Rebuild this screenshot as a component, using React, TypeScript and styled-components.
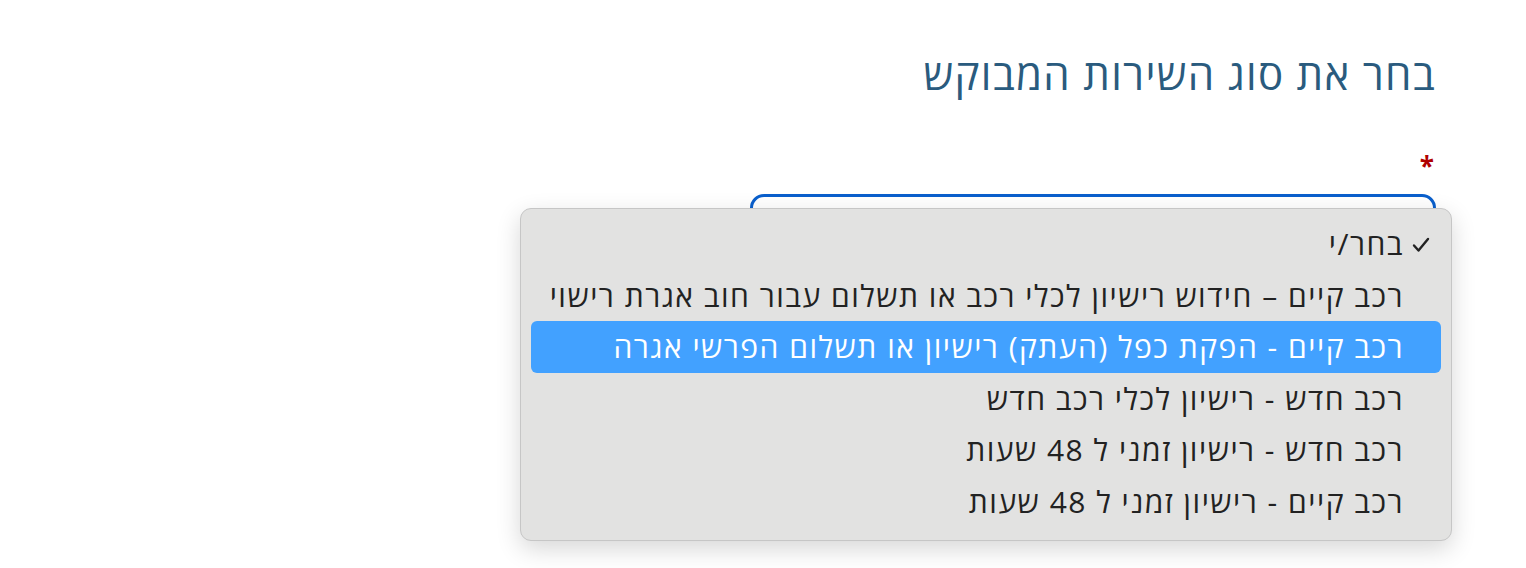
import * as React from "react";
import styled, { createGlobalStyle } from "styled-components";

const GlobalStyle = createGlobalStyle`
  html, body {
    margin: 0;
    padding: 0;
    background: #ffffff;
  }
  body {
    font-family: "Open Sans", "DejaVu Sans", sans-serif;
  }
`;

const Page = styled.div`
  direction: rtl;
  width: 1526px;
  height: 568px;
  box-sizing: border-box;
  padding: 44px 90px 0 0;
  display: flex;
  flex-direction: column;
  align-items: flex-start;
  overflow: hidden;
`;

const Title = styled.h2`
  margin: 0;
  font-family: "Open Sans", sans-serif;
  font-weight: 400;
  font-size: 42px;
  letter-spacing: 1.3px;
  line-height: 60px;
  color: #2a5b7e;
`;

const Required = styled.span`
  margin: 49px 2px 0 0;
  font-size: 26px;
  line-height: 26px;
  font-weight: 700;
  color: #b00000;
`;

const Field = styled.div`
  position: relative;
  margin-top: 15px;
`;

const SelectBox = styled.div`
  width: 686px;
  height: 52px;
  box-sizing: border-box;
  border: 3px solid #0a5fcc;
  border-radius: 14px;
  background: #fff;
`;

const Menu = styled.ul`
  position: absolute;
  top: 14px;
  right: -16px;
  width: 932px;
  box-sizing: border-box;
  margin: 0;
  padding: 9px 10px 13px;
  list-style: none;
  background: #e2e2e1;
  border: 1px solid #c6c6c6;
  border-radius: 11px;
  box-shadow: 0 8px 24px rgba(0, 0, 0, 0.16);
`;

const Option = styled.li<{ $active?: boolean }>`
  position: relative;
  height: 51.5px;
  padding-right: 37px;
  border-radius: 6px;
  display: flex;
  align-items: center;
  font-family: "Open Sans", sans-serif;
  font-size: 30px;
  letter-spacing: 1.5px;
  color: ${({ $active }) => ($active ? "#ffffff" : "#222222")};
  background: ${({ $active }) => ($active ? "#42a1ff" : "transparent")};
  white-space: nowrap;
`;

const Check = styled.svg`
  position: absolute;
  right: 11px;
  top: 50%;
  margin-top: -7px;
  width: 18px;
  height: 16px;
`;

const options = [
  "בחר/י",
  "רכב קיים – חידוש רישיון לכלי רכב או תשלום עבור חוב אגרת רישוי",
  "רכב קיים - הפקת כפל (העתק) רישיון או תשלום הפרשי אגרה",
  "רכב חדש - רישיון לכלי רכב חדש",
  "רכב חדש - רישיון זמני ל 48 שעות",
  "רכב קיים - רישיון זמני ל 48 שעות",
];

const App: React.FC = () => (
  <>
    <GlobalStyle />
    <Page>
      <Title>בחר את סוג השירות המבוקש</Title>
      <Required>*</Required>
      <Field>
        <SelectBox />
        <Menu>
          {options.map((label, i) => (
            <Option key={label} $active={i === 2}>
              {i === 0 && (
                <Check viewBox="0 0 18 16">
                  <path
                    d="M2 8.5 L6.5 13.5 L16 2"
                    fill="none"
                    stroke="#222"
                    strokeWidth="2.4"
                    strokeLinecap="round"
                    strokeLinejoin="round"
                  />
                </Check>
              )}
              {label}
            </Option>
          ))}
        </Menu>
      </Field>
    </Page>
  </>
);

export default App;
